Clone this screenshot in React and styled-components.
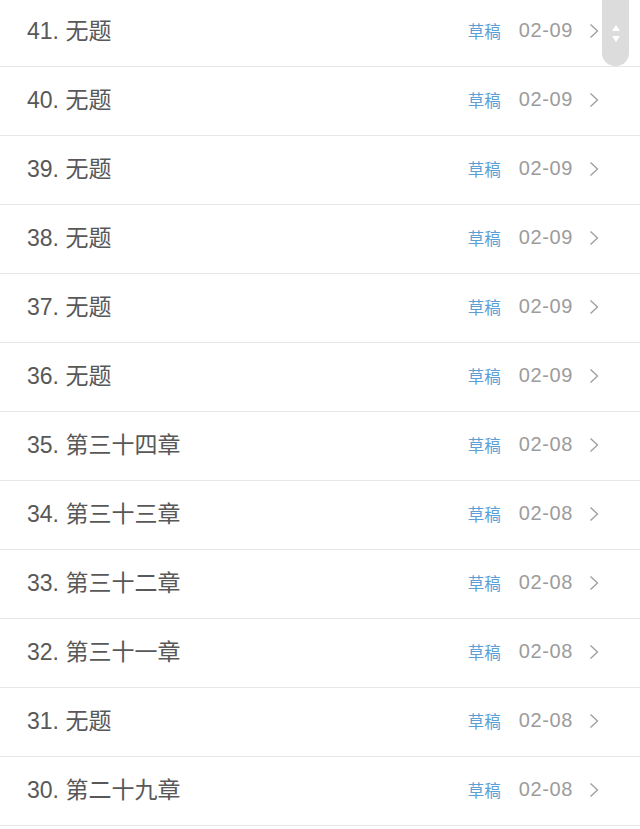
import styled, { createGlobalStyle } from "styled-components";

const GlobalStyle = createGlobalStyle`
  html, body {
    margin: 0;
    padding: 0;
    background: #fff;
    overflow: hidden;
  }
  body {
    font-family: "Liberation Sans", "Noto Sans CJK SC", sans-serif;
  }
`;

const chapters = [
  { no: 41, title: "无题", date: "02-09" },
  { no: 40, title: "无题", date: "02-09" },
  { no: 39, title: "无题", date: "02-09" },
  { no: 38, title: "无题", date: "02-09" },
  { no: 37, title: "无题", date: "02-09" },
  { no: 36, title: "无题", date: "02-09" },
  { no: 35, title: "第三十四章", date: "02-08" },
  { no: 34, title: "第三十三章", date: "02-08" },
  { no: 33, title: "第三十二章", date: "02-08" },
  { no: 32, title: "第三十一章", date: "02-08" },
  { no: 31, title: "无题", date: "02-08" },
  { no: 30, title: "第二十九章", date: "02-08" },
];

const Page = styled.div`
  position: relative;
  width: 640px;
  height: 829px;
  overflow: hidden;
  background: #fff;
`;

const List = styled.ul`
  list-style: none;
  margin: -2px 0 0;
  padding: 0;
`;

const Row = styled.li`
  display: flex;
  align-items: center;
  box-sizing: border-box;
  height: 69px;
  padding: 0 41px 3px 27px;
  border-bottom: 1px solid #e6e6e6;
`;

const Title = styled.span`
  flex: 1;
  font-size: 23px;
  color: #585858;
  white-space: nowrap;
  margin-bottom: 3px;
`;

const Status = styled.span`
  font-size: 16.5px;
  color: #5b9fd6;
  margin-right: 18px;
`;

const Date = styled.span`
  font-size: 20px;
  color: #9c9c9c;
  letter-spacing: 0.6px;
  margin-right: 16px;
`;

const Chevron = styled.svg`
  width: 10px;
  height: 16px;
  flex: none;
`;

const Thumb = styled.div`
  position: absolute;
  top: -14px;
  left: 602px;
  width: 27px;
  height: 80px;
  border-radius: 13px;
  background: #dcdcdc;
  display: flex;
  flex-direction: column;
  align-items: center;
  justify-content: center;
  gap: 5px;
  padding-top: 14px;
  box-sizing: border-box;
`;

const Arrow = styled.div`
  width: 0;
  height: 0;
  border-left: 4.5px solid transparent;
  border-right: 4.5px solid transparent;
  ${(p) =>
    p.$down
      ? "border-top: 6px solid #fff;"
      : "border-bottom: 6px solid #fff;"}
`;

const App = () => {
  return (
    <Page>
      <GlobalStyle />
      <List>
        {chapters.map((c) => (
          <Row key={c.no}>
            <Title>
              {c.no}. {c.title}
            </Title>
            <Status>草稿</Status>
            <Date>{c.date}</Date>
            <Chevron viewBox="0 0 10 16">
              <path
                d="M1.5 1.5 L8.5 8 L1.5 14.5"
                fill="none"
                stroke="#a0a0a0"
                strokeWidth="1.4"
              />
            </Chevron>
          </Row>
        ))}
      </List>
      <Thumb>
        <Arrow />
        <Arrow $down />
      </Thumb>
    </Page>
  );
};

export default App;
